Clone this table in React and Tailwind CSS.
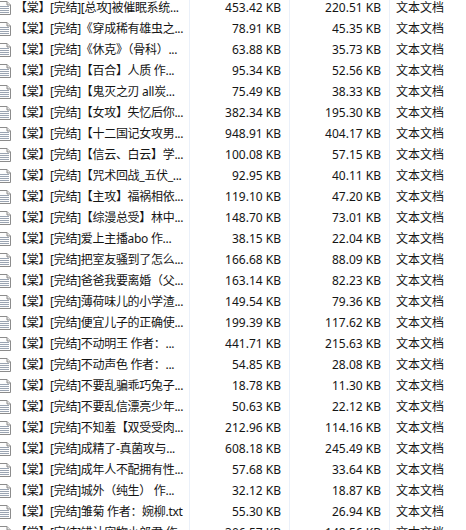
import React from 'react';

const rows = [
    ['【棠】[完结][总攻]被催眠系统...', '453.42 KB', '220.51 KB'],
    ['【棠】[完结]《穿成稀有雄虫之...', '78.91 KB', '45.35 KB'],
    ['【棠】[完结]《休克》（骨科）...', '63.88 KB', '35.73 KB'],
    ['【棠】[完结]【百合】人质 作...', '95.34 KB', '52.56 KB'],
    ['【棠】[完结]【鬼灭之刃 all炭...', '75.49 KB', '38.33 KB'],
    ['【棠】[完结]【女攻】失忆后你...', '382.34 KB', '195.30 KB'],
    ['【棠】[完结]【十二国记女攻男...', '948.91 KB', '404.17 KB'],
    ['【棠】[完结]【信云、白云】学...', '100.08 KB', '57.15 KB'],
    ['【棠】[完结]【咒术回战_五伏_...', '92.95 KB', '40.11 KB'],
    ['【棠】[完结]【主攻】福祸相依...', '119.10 KB', '47.20 KB'],
    ['【棠】[完结]【综漫总受】林中...', '148.70 KB', '73.01 KB'],
    ['【棠】[完结]爱上主播abo 作...', '38.15 KB', '22.04 KB'],
    ['【棠】[完结]把室友骚到了怎么...', '166.68 KB', '88.09 KB'],
    ['【棠】[完结]爸爸我要离婚（父...', '163.14 KB', '82.23 KB'],
    ['【棠】[完结]薄荷味儿的小学渣...', '149.54 KB', '79.36 KB'],
    ['【棠】[完结]便宜儿子的正确使...', '199.39 KB', '117.62 KB'],
    ['【棠】[完结]不动明王 作者：...', '441.71 KB', '215.63 KB'],
    ['【棠】[完结]不动声色 作者：...', '54.85 KB', '28.08 KB'],
    ['【棠】[完结]不要乱骗乖巧兔子...', '18.78 KB', '11.30 KB'],
    ['【棠】[完结]不要乱信漂亮少年...', '50.63 KB', '22.12 KB'],
    ['【棠】[完结]不知羞【双受受肉...', '212.96 KB', '114.16 KB'],
    ['【棠】[完结]成精了-真菌攻与...', '608.18 KB', '245.49 KB'],
    ['【棠】[完结]成年人不配拥有性...', '57.68 KB', '33.64 KB'],
    ['【棠】[完结]城外（纯生） 作...', '32.12 KB', '18.87 KB'],
    ['【棠】[完结]雏菊 作者：婉柳.txt', '55.30 KB', '26.94 KB'],
    ['【棠】[完结]错认宠物小郎君 作...', '306.57 KB', '148.56 KB'],
];

// plain text-document icon, left edge hidden like the cropped list
const TxtIcon = () => (
    <svg width="16" height="16" viewBox="0 0 16 16" className="block w-[16px] h-[16px] -ml-[4px]">
        <path d="M2.5 1.5 H11 L14.5 5 V14.5 H2.5 Z" fill="#fdfdfd" stroke="#8c8c8c" />
        <path d="M11 1.5 V5 H14.5" fill="#e4e4e4" stroke="#8c8c8c" />
        <path d="M4 6.5 H13 M4 8.5 H13 M4 10.5 H13 M4 12.5 H13" stroke="#9aa4b2" />
    </svg>
);

export default function App() {
    return (
        <div className="w-[466px] h-[530px] overflow-hidden bg-white text-[12px] text-[#151515]" style={{ fontFamily: '"Noto Sans", "Noto Sans CJK SC", sans-serif' }}>
            <div className="-mt-[3px]">
                {rows.map(([name, size, packed], i) => (
                    <div key={i} className="flex h-[21px] items-stretch leading-none">
                        <div className="w-[15px] flex-none flex items-center">
                            <TxtIcon />
                        </div>
                        <div className="w-[175px] flex-none flex items-center overflow-hidden whitespace-nowrap tracking-[-0.3px] border-r border-[#eaf0f9]">
                            {name}
                        </div>
                        <div className="w-[100px] flex-none pr-[8px] border-r border-[#eaf0f9] flex items-center justify-end whitespace-nowrap">{size}</div>
                        <div className="w-[100px] flex-none pr-[8px] border-r border-[#eaf0f9] flex items-center justify-end whitespace-nowrap">{packed}</div>
                        <div className="pl-[6px] flex items-center whitespace-nowrap">文本文档</div>
                    </div>
                ))}
            </div>
        </div>
    );
}
